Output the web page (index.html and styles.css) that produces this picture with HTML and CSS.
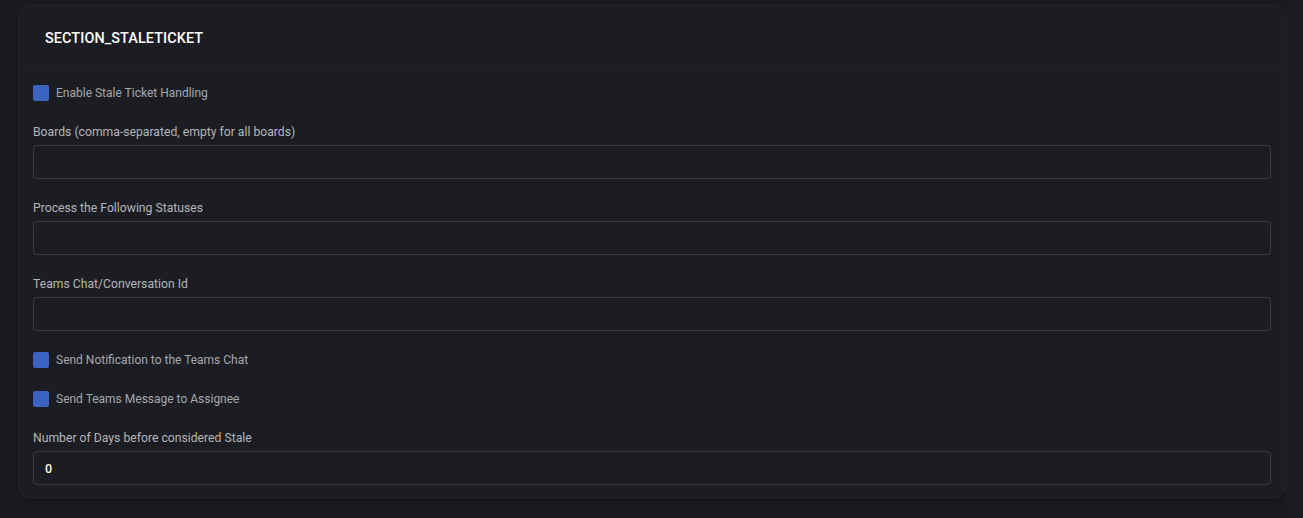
FILE: index.html
```html
<!DOCTYPE html>
<html>
<head>
<meta charset="utf-8">
<link rel="stylesheet" href="styles.css">
</head>
<body>
<div class="page">
  <section class="card">
    <header class="card-header">SECTION_STALETICKET</header>
    <div class="card-body">
      <label class="check"><span class="box"></span><span>Enable Stale Ticket Handling</span></label>
      <div class="field">
        <div class="label">Boards (comma-separated, empty for all boards)</div>
        <div class="input"></div>
      </div>
      <div class="field">
        <div class="label">Process the Following Statuses</div>
        <div class="input"></div>
      </div>
      <div class="field">
        <div class="label">Teams Chat/Conversation Id</div>
        <div class="input"></div>
      </div>
      <label class="check"><span class="box"></span><span>Send Notification to the Teams Chat</span></label>
      <label class="check"><span class="box"></span><span>Send Teams Message to Assignee</span></label>
      <div class="field">
        <div class="label">Number of Days before considered Stale</div>
        <div class="input"><span class="value">0</span></div>
      </div>
    </div>
  </section>
  <div class="scroll"></div>
</div>
</body>
</html>
```

FILE: styles.css
```css
html, body {
  margin: 0;
  padding: 0;
  background: #191a1e;
  font-family: Roboto, "Liberation Sans", sans-serif;
}
.page {
  display: flex;
  width: 1303px;
  height: 518px;
  box-sizing: border-box;
  padding: 5px 0 0 18px;
}
.card {
  width: 1268px;
  height: 494px;
  box-sizing: border-box;
  background: #1c1d22;
  border: 1px solid #222328;
  border-radius: 12px;
  box-shadow: 0 1px 2px rgba(0,0,0,0.35);
}
.scroll {
  width: 17px;
  margin-left: auto;
  margin-top: -5px;
  background: #1b1c20;
}
.card-header {
  height: 64px;
  box-sizing: border-box;
  padding: 24px 0 0 26px;
  color: #ffffff;
  font-size: 14.4px;
  font-weight: 500;
  letter-spacing: 0.1px;
  line-height: 17px;
  border-bottom: 1px solid #222328;
}
.card-body {
  padding: 15px 14px 0 14px;
  display: flex;
  flex-direction: column;
}
.check {
  display: flex;
  align-items: center;
  gap: 7px;
  height: 16px;
  margin-bottom: 23px;
  font-size: 12px;
  line-height: 16px;
  color: #a6a8ad;
}
.box {
  width: 16px;
  height: 16px;
  border-radius: 2px;
  background: #3b64c2;
}
.field {
  display: flex;
  flex-direction: column;
  margin-bottom: 21px;
}
.label {
  font-size: 12.2px;
  line-height: 14px;
  color: #b3b5ba;
  margin-top: 1px;
  margin-bottom: 6px;
}
.input {
  height: 34px;
  box-sizing: border-box;
  border: 1px solid #3a3b41;
  border-radius: 4px;
  background: #1c1d22;
  display: flex;
  align-items: center;
  padding-left: 11px;
}
.value {
  color: #fff6de;
  font-size: 12.5px;
  font-weight: 500;
}
```
